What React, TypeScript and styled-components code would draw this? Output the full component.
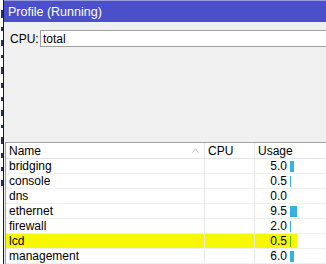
import React from "react";
import styled, { createGlobalStyle } from "styled-components";

const GlobalStyle = createGlobalStyle`
  html, body { margin: 0; padding: 0; background: #f0f0f0; }
  body { font-family: "Liberation Sans", Arial, sans-serif; font-size: 12px; color: #000; }
`;

const Screen = styled.div`
  display: flex;
  width: 326px;
  height: 264px;
  overflow: hidden;
`;

const BackStrip = styled.div`
  width: 3px;
  background: #fff;
  display: flex;
  flex-direction: column;
  align-items: flex-end;
  padding-top: 10px;
  gap: 9px;
`;

const BackMark = styled.span<{ $h: number }>`
  display: block;
  width: 2px;
  height: ${(p) => p.$h}px;
  background: #2a3060;
`;

const Window = styled.div`
  flex: 1;
  display: flex;
  flex-direction: column;
  border-left: 1px solid #1a1a1a;
  background: #f0f0f0;
  min-width: 0;
`;

const TitleBar = styled.div`
  height: 21px;
  border-top: 1px solid #9a9ce0;
  background: #4b4fca;
  color: #fff;
  font-size: 12.5px;
  display: flex;
  align-items: center;
  padding-left: 4px;
`;

const FilterRow = styled.div`
  display: flex;
  margin-top: 8px;
  height: 17px;
`;

const FilterLabel = styled.div`
  width: 36px;
  padding-left: 6px;
  box-sizing: border-box;
  display: flex;
  align-items: center;
  font-size: 12px;
`;

const FilterInput = styled.div`
  flex: 1;
  background: #fff;
  border: 1px solid #a0a0a0;
  border-right: none;
  display: flex;
  align-items: center;
  padding-left: 2px;
  font-size: 12px;
`;

const Spacer = styled.div`
  height: 95px;
`;

const Table = styled.div`
  margin-left: 1px;
  border-top: 1px solid #a0a0a0;
  border-left: 1px solid #a0a0a0;
  background: #fff;
  flex: 1;
  display: flex;
  flex-direction: column;
`;

const Row = styled.div<{ $header?: boolean }>`
  display: grid;
  grid-template-columns: 199px 50px 42px 1fr;
  height: ${(p) => (p.$header ? 15 : 14)}px;
  border-bottom: 1px solid ${(p) => (p.$header ? "#e3e3e3" : "#efefef")};
  flex-shrink: 0;
`;

const Cell = styled.div<{ $sep?: boolean; $hl?: boolean }>`
  display: flex;
  align-items: center;
  padding-left: 3px;
  border-right: ${(p) => (p.$sep ? "1px solid #e6e6e6" : "none")};
  background: ${(p) => (p.$hl ? "#f7f700" : "transparent")};
  white-space: nowrap;
  overflow: hidden;
`;

const HeadText = styled.span`
  flex: 1;
`;

const SortArrow = styled.svg`
  margin-right: 5px;
`;

const UsageValue = styled.span`
  width: 29px;
  text-align: right;
`;

const Bar = styled.span<{ $color: string }>`
  display: inline-block;
  height: 11px;
  margin-left: 3px;
  background: ${(p) => p.$color};
`;

const rows = [
  { name: "bridging", usage: 5.0 },
  { name: "console", usage: 0.5 },
  { name: "dns", usage: 0.0 },
  { name: "ethernet", usage: 9.5 },
  { name: "firewall", usage: 2.0 },
  { name: "lcd", usage: 0.5, hl: true },
  { name: "management", usage: 6.0 },
];

const marks = [8, 4, 6, 3, 7, 5, 4, 6, 3, 7, 5, 4, 6];

export default function App() {
  return (
    <>
      <GlobalStyle />
      <Screen>
        <BackStrip>
          {marks.map((h, i) => (
            <BackMark key={i} $h={h} />
          ))}
        </BackStrip>
        <Window>
          <TitleBar>Profile (Running)</TitleBar>
          <FilterRow>
            <FilterLabel>CPU:</FilterLabel>
            <FilterInput>total</FilterInput>
          </FilterRow>
          <Spacer />
          <Table>
            <Row $header>
              <Cell $sep>
                <HeadText>Name</HeadText>
                <SortArrow width="7" height="5" viewBox="0 0 7 5">
                  <polyline points="0.5,4.5 3.5,0.8 6.5,4.5" fill="none" stroke="#b8b8b8" strokeWidth="1" />
                </SortArrow>
              </Cell>
              <Cell $sep>CPU</Cell>
              <Cell>Usage</Cell>
              <Cell />
            </Row>
            {rows.map((r) => {
              const w = r.usage > 0 ? Math.max(1, Math.round(r.usage * 0.7)) : 0;
              return (
                <Row key={r.name}>
                  <Cell $sep $hl={r.hl}>{r.name}</Cell>
                  <Cell $sep $hl={r.hl} />
                  <Cell $hl={r.hl}>
                    <UsageValue>{r.usage.toFixed(1)}</UsageValue>
                    {w > 0 && <Bar $color={r.hl ? "#5cb400" : "#3aafe6"} style={{ width: w }} />}
                  </Cell>
                  <Cell />
                </Row>
              );
            })}
          </Table>
        </Window>
      </Screen>
    </>
  );
}
